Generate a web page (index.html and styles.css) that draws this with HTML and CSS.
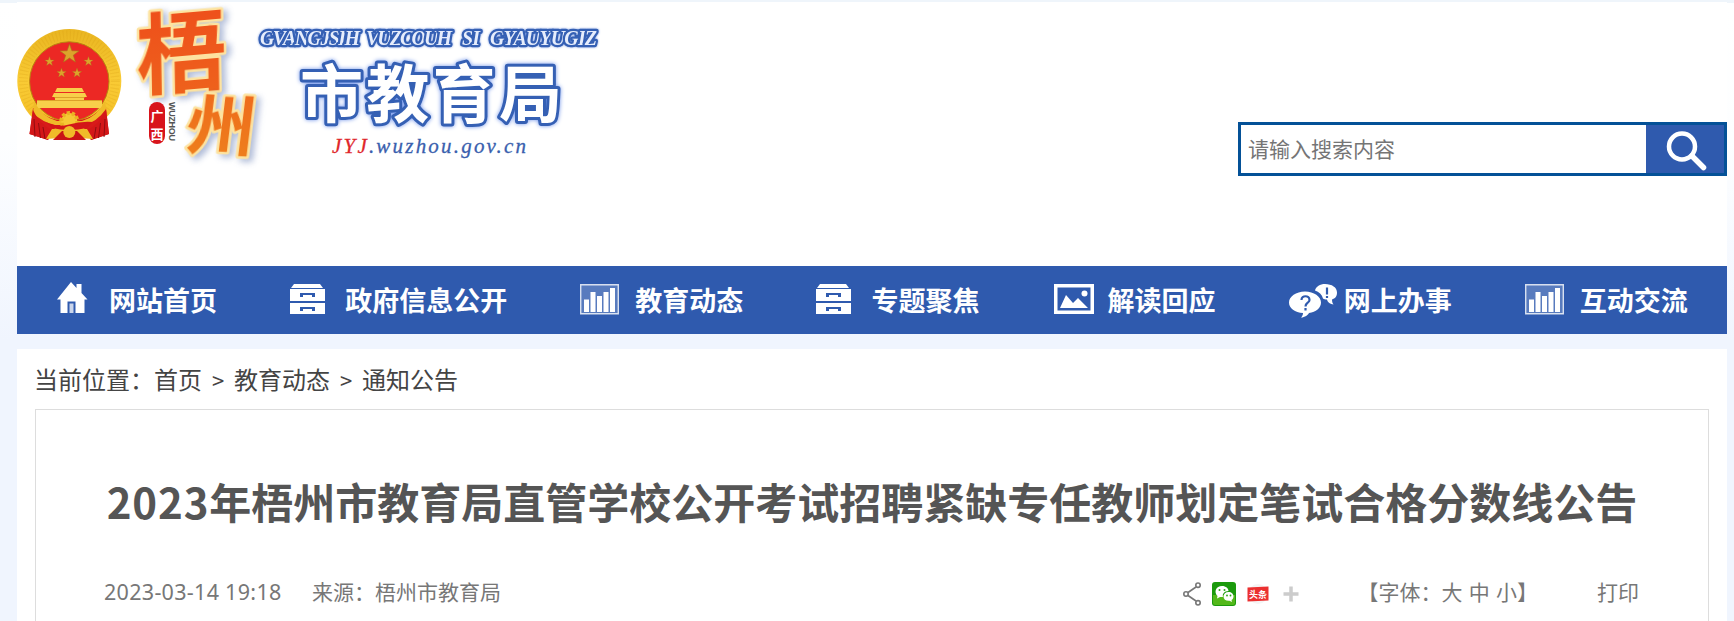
FILE: index.html
```
<!DOCTYPE html>
<html lang="zh-CN">
<head>
    <meta charset="UTF-8">
    <meta name="viewport" content="width=device-width, initial-scale=1.0">
    <title>2023年梧州市教育局直管学校公开考试招聘紧缺专任教师划定笔试合格分数线公告</title>
    <link rel="stylesheet" href="styles.css">
</head>
<body>

    <!-- shared icons -->
    <svg class="sprite">
        <symbol id="cabinet" viewBox="0 0 54 36">
            <path d="M4 2h26l3 4H1z"/>
            <path fill-rule="evenodd" d="M0 7h35v12H0zM10 11v4h3v-2h9v2h3v-4z"/>
            <path fill-rule="evenodd" d="M0 21h35v11H0zM10 25v4h3v-2h9v2h3v-4z"/>
        </symbol>
        <symbol id="chart" viewBox="0 0 54 36">
            <path d="M.7 2.700h37.600v29H.7z" fill-opacity=".2" stroke="#fff" stroke-opacity=".8" stroke-width="1.400"/>
            <path d="M4 17.500h5V30H4zM10.500 10h5v20h-5zM17 14h5v16h-5zM23.500 10h5v20h-5zM30 6h5v24h-5z"/>
        </symbol>
    </svg>

    <div class="wrap header">
        <svg class="logo" width="620" height="180" viewBox="0 0 620 180">
            <defs>
                <linearGradient id="gold" x1="0" y1="0" x2="0" y2="1">
                    <stop offset="0" stop-color="#e9b520"/>
                    <stop offset=".5" stop-color="#f9cb35"/>
                    <stop offset="1" stop-color="#f3bd24"/>
                </linearGradient>
                <linearGradient id="fire" x1="0" y1="0" x2="0" y2="1">
                    <stop offset="0" stop-color="#ee4a1b"/>
                    <stop offset="1" stop-color="#ee651c"/>
                </linearGradient>
                <linearGradient id="ember" x1="0" y1="0" x2="0" y2="1">
                    <stop offset="0" stop-color="#ee651c"/>
                    <stop offset="1" stop-color="#ee821c"/>
                </linearGradient>
                <polygon id="star" points="0,-10 2.400,-3.200 9.500,-3.100 3.800,1.200 5.900,8.100 0,4 -5.900,8.100 -3.800,1.200 -9.500,-3.100 -2.400,-3.200"/>
            </defs>

            <!-- national emblem -->
            <circle cx="69.300" cy="81" r="52" fill="url(#gold)"/>
            <circle cx="69.300" cy="81" r="46" fill="none" stroke="#d79a14" stroke-width="9" stroke-dasharray="1 2.500" opacity=".25"/>
            <circle cx="69.300" cy="81.500" r="39.700" fill="#ec2824" stroke="#b8860f" stroke-width="1"/>
            <g fill="#dca32b" stroke="#a8701a" stroke-width=".6">
                <use href="#star" transform="translate(69.500 54)"/>
                <use href="#star" transform="translate(49.500 61.500) scale(.5)"/>
                <use href="#star" transform="translate(88.500 61.500) scale(.5)"/>
                <use href="#star" transform="translate(61.500 73) scale(.5)"/>
                <use href="#star" transform="translate(77 73) scale(.5)"/>
            </g>
            <path d="M57 88h25l2 4H55zM54 93h31l2 4H52zM55 97h29v3H55zM37 100h65v8H37z" fill="#f8cf4a"/>
            <path d="M37 100.500h65M54 97.500h31" stroke="#d08c1c" stroke-width=".7"/>
            <path d="M33 108L29.500 134 48 140 55 128H84L91 140 109 134 106 108L100 109Q90 121 69 121T38 109Z" fill="#d81a1a"/>
            <path d="M34 101Q42 117 57 121L82 121Q97 117 105 101L106 109Q97 122 84 125H55Q42 122 33 113Z" fill="#f0bb29"/>
            <path d="M33 110L29.500 134 48 140 52 130Q39 124 33 110ZM106 110L109 134 91 140 87 130Q100 124 106 110Z" fill="#d31718"/>
            <path d="M34 119l1 18M38.500 123l2 15M43 127l2 12M105 119l-1 18M100.500 123l-2 15M96 127l-2 12" stroke="#8f0d10" stroke-width="1"/>
            <path d="M52 129L46 139 60 138 66 129ZM87 129L93 139 79 138 73 129Z" fill="#f0bb29"/>
            <circle cx="69.300" cy="121" r="8" fill="#f6c935" stroke="#eab422" stroke-width="4" stroke-dasharray="3 2"/>
            <path d="M46 122Q57 128 69 124.500T93 122L87 128Q69 132 52 128Z" fill="#d31718"/>
            <path d="M53 140L62 131H77L86 140Z" fill="#c91516"/>
            <circle cx="69.300" cy="132" r="6" fill="#f0bb29"/>

            <!-- brush lettering -->
            <g class="brush">
                <text x="0" y="0" font-size="88" fill="url(#fire)" transform="translate(137 89) rotate(-5) skewX(-4) scale(1.03 1)">梧</text>
                <text x="0" y="0" font-size="66" fill="url(#ember)" transform="translate(184 148) rotate(3) skewX(-4) scale(1.05 1)">州</text>
            </g>
            <rect x="149" y="102" width="16" height="42" rx="8" fill="#d8141b"/>
            <text class="seal" x="150.500" y="121">广</text>
            <text class="seal" x="150.500" y="139">西</text>
            <text class="wuzhou" transform="translate(168.500 102) rotate(90)" textLength="39">WUZHOU</text>

            <g class="pinyin">
                <text x="260" y="45" textLength="100">GVANGJSIH</text>
                <text x="366" y="45" textLength="86">VUZCOUH</text>
                <text x="462" y="45" textLength="18">SI</text>
                <text x="490" y="45" textLength="107">GYAUYUGIZ</text>
            </g>
            <text class="bureau" x="300" y="117">市教育局</text>
            <text class="domain" x="332" y="152.500" textLength="194"><tspan class="red">JYJ</tspan>.wuzhou.gov.cn</text>
        </svg>

        <form class="search">
            <input type="text" placeholder="请输入搜索内容">
            <button type="button" aria-label="搜索">
                <svg width="78" height="48" viewBox="0 0 78 48">
                    <circle cx="36" cy="21.500" r="13" fill="none" stroke="#fff" stroke-width="4.500"/>
                    <path d="M46 31l11.500 11.500" stroke="#fff" stroke-width="5.500" stroke-linecap="round"/>
                </svg>
            </button>
        </form>
    </div>

    <div class="wrap nav">
        <a href="#">
            <svg viewBox="0 0 54 36"><path d="M17 0l5.500 6V2h5v9l6 6.500h-3V31h-9V19.500h-8V31h-7V17.500h-3.500z"/><path d="M15.500 21.500h4V31h-4z" fill-opacity=".75"/></svg>
            网站首页
        </a>
        <a href="#"><svg><use href="#cabinet"/></svg>政府信息公开</a>
        <a href="#"><svg><use href="#chart"/></svg>教育动态</a>
        <a href="#"><svg><use href="#cabinet"/></svg>专题聚焦</a>
        <a href="#">
            <svg viewBox="0 0 54 36"><path fill-rule="evenodd" d="M1 2h40v30H1zM4.500 5.500v23h33v-23z"/><path d="M7 26l6-13 7 8 5-5 10 10z"/><circle cx="31.500" cy="11.500" r="3"/></svg>
            解读回应
        </a>
        <a href="#">
            <svg viewBox="0 0 54 36">
                <path d="M36 2c7 0 12 3.500 12 8.500 0 4-2 6-5 7 0 2 .5 4 1.500 5-3-.5-6-2-6.500-5-2 0-3-.3-4-1-1-4-4-6.500-8-8C27 4.500 31 2 36 2z"/>
                <path d="M16 9.500c9 0 16 5 16 11 0 5.500-5 9.500-12 10.500-1 2-4 4.500-8 4.500 1.500-1.500 2-3 2-4.500C6 30.500 0 26.500 0 20.500c0-6 7-11 16-11z"/>
                <path class="cut" d="M12.500 18c0-5 8-5 8 0 0 3-4 2.500-4 6.500M16.500 26v2.500M38 5.500v7M38 14v2"/>
            </svg>
            网上办事
        </a>
        <a href="#"><svg><use href="#chart"/></svg>互动交流</a>
    </div>

    <div class="wrap content">
        <div class="crumbs">当前位置：<a href="#">首页</a><i>&gt;</i><a href="#">教育动态</a><i>&gt;</i><a href="#">通知公告</a></div>

        <div class="article">
            <h1><span>2023</span>年梧州市教育局直管学校公开考试招聘紧缺专任教师划定笔试合格分数线公告</h1>
            <div class="meta">
                <span class="date">2023-03-14 19:18</span>
                <span class="source">来源：梧州市教育局</span>
                <div class="share">
                    <svg width="18" height="24" viewBox="0 0 18 24" fill="none" stroke="#777" stroke-width="1.600"><path d="M13 5L5 10.500M5 13.500L13 19"/><circle cx="3" cy="12" r="2.200"/><circle cx="15" cy="3.200" r="2.200"/><circle cx="15" cy="20.800" r="2.200"/></svg>
                    <svg width="24" height="24" viewBox="0 0 24 24">
                        <rect width="24" height="24" rx="3" fill="#1b9a0c"/>
                        <path d="M1 13h22v8q0 2-2 2H3q-2 0-2-2z" fill="#53b81a"/>
                        <path d="M10 4c4 0 6.500 2.500 6.500 5-4 0-6.500 3-5.500 6H8l-3 1.500.5-2.500C1.500 10 4 4 10 4zM16.500 10c3 0 5 2 5 4.500 0 1.500-1 3-2 3.500l.5 2-2.500-1.200c-3.500.4-6-1.500-6-4.300 0-2.500 2-4.500 5-4.500z" fill="#fff"/>
                        <g fill="#2ba512"><circle cx="7.500" cy="8" r="1"/><circle cx="12.500" cy="8" r="1"/><circle cx="15" cy="13.500" r=".9"/><circle cx="18.500" cy="13.500" r=".9"/></g>
                    </svg>
                    <svg width="22" height="24" viewBox="0 0 22 24"><circle cx="11" cy="12" r="10" fill="#f4f4f4"/><path d="M.5 5.500l21-1v14l-21 1z" fill="#eb3030"/><text class="toutiao" x="2" y="15.500">头条</text></svg>
                    <svg width="16" height="24" viewBox="0 0 16 24"><path d="M8 4.500v15M.5 12h15" stroke="#ccc" stroke-width="3.500"/></svg>
                </div>
                <span class="size">【字体：<a>大</a> <a>中</a> <a>小</a>】</span>
                <a class="print">打印</a>
            </div>
        </div>
    </div>

</body>
</html>
```
FILE: styles.css
```
* {
    box-sizing: border-box;
}
body {
    margin: 0;
    padding-top: 2px;
    height: 621px;
    overflow: hidden;
    font-family: "Noto Sans CJK SC", sans-serif;
    background: linear-gradient(#eff5fb 3px, #fff 3px, #fdfeff 140px, #f0f5fe 340px);
}
a {
    color: inherit;
    text-decoration: none;
}
.sprite {
    display: none;
}
.wrap {
    width: 1710px;
    margin-left: 17px;
    background: #fff;
}

/* header */
.header {
    display: flex;
    justify-content: space-between;
    height: 264px;
}
.logo {
    margin: -2px 0 0 -17px;
    overflow: visible;
}
.brush text {
    font-weight: bold;
    stroke: #fde3a0;
    stroke-width: 5px;
    stroke-linejoin: round;
    paint-order: stroke;
    filter: drop-shadow(4px 3px 3px rgba(60, 90, 160, .4));
}
.seal {
    font-size: 13px;
    font-weight: bold;
    fill: #fff;
}
.wuzhou {
    font: bold 9px "Liberation Sans", sans-serif;
    fill: #555;
}
.pinyin text {
    font: italic bold 20px "Liberation Serif", serif;
    fill: #e6edfc;
    stroke: #3560b4;
    stroke-width: 4.5px;
    stroke-linejoin: round;
    paint-order: stroke;
    filter: drop-shadow(0 0 1px #7d9be0);
}
.bureau {
    font-size: 63px;
    font-weight: bold;
    letter-spacing: 3.3px;
    fill: #fff;
    stroke: #3560b4;
    stroke-width: 6px;
    stroke-linejoin: round;
    paint-order: stroke;
    filter: drop-shadow(0 0 2px #6f93ea);
}
.domain {
    font: italic 21px "Liberation Serif", serif;
    fill: #3a5fae;
    stroke: #3a5fae;
    stroke-width: .3px;
}
.domain .red {
    fill: #e0262a;
    stroke: #e0262a;
}
.search {
    display: flex;
    width: 489px;
    height: 54px;
    margin-top: 120px;
    border: 3px solid #045197;
}
.search input {
    flex: 1;
    min-width: 0;
    padding: 0 7px 2px;
    border: 0;
    outline: 0;
    font: 21px "Noto Sans CJK SC", sans-serif;
}
.search input::placeholder {
    color: #757575;
}
.search button {
    width: 78px;
    padding: 0;
    border: 0;
    background: #2f5aae;
}
.search button svg {
    display: block;
}

/* main navigation */
.nav {
    display: flex;
    height: 68px;
    padding: 0 3px 2px 0;
    background: #2f5aae;
    color: #fff;
    font-size: 27px;
    font-weight: bold;
}
.nav a {
    display: flex;
    flex: 1 0 auto;
    align-items: center;
    padding-left: 37px;
    white-space: nowrap;
}
.nav svg {
    width: 54px;
    height: 36px;
    margin: 2px 1px 0 0;
    fill: #fff;
}
.nav .cut {
    fill: none;
    stroke: #2f5aae;
    stroke-width: 2.2px;
}

/* content */
.content {
    height: 272px;
    margin-top: 15px;
    padding: 0 18px;
}
.crumbs {
    height: 60px;
    margin-left: -1px;
    line-height: 59px;
    font-size: 24px;
    color: #444;
}
.crumbs i {
    display: inline-block;
    width: 32px;
    text-align: center;
    font-style: normal;
    font-size: 22px;
}
.article {
    height: 230px;
    padding: 61px 69px 0;
    border: 1px solid #ddd;
    color: #777;
}
h1 {
    margin: 0;
    line-height: 60px;
    font-size: 42px;
    color: #555;
    text-align: center;
    white-space: nowrap;
}
h1 span {
    letter-spacing: .9px;
}
.meta {
    display: flex;
    align-items: center;
    height: 40px;
    margin-top: 40px;
    font-size: 21px;
    white-space: nowrap;
}
.date {
    width: 208px;
    margin-left: -1px;
    font-family: "Noto Sans", sans-serif;
    font-size: 21.5px;
    letter-spacing: .3px;
}
.share {
    display: flex;
    gap: 11px;
    margin: 6px 0 0 auto;
}
.share svg:last-child {
    margin-left: 3px;
}
.toutiao {
    font-size: 9px;
    font-weight: bold;
    fill: #fff;
}
.size {
    margin-left: 59px;
    word-spacing: 1.5px;
}
.print {
    margin-left: 59px;
}
```
